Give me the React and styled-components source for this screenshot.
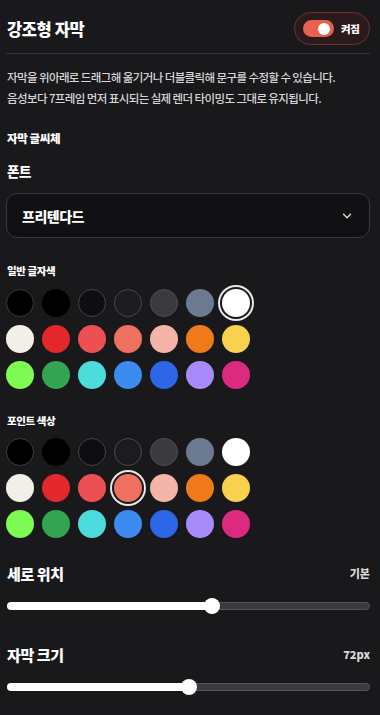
import React from "react";
import styled, { createGlobalStyle } from "styled-components";
import { ChevronDown } from "lucide-react";

const Global = createGlobalStyle`
  html, body { margin: 0; padding: 0; background: #19181b; }
  body { font-family: "Noto Sans CJK KR", "Noto Sans", sans-serif; color: #fff; overflow: hidden; }
  * { box-sizing: border-box; }
`;

const Panel = styled.div`
  width: 380px;
  height: 715px;
  padding: 12px 10px 0 6px;
  background: #19181b;
  display: flex;
  flex-direction: column;
`;

const Header = styled.div`
  display: flex;
  align-items: center;
  justify-content: space-between;
  height: 33px;
  padding-left: 1px;
`;

const Title = styled.h1`
  margin: 0;
  font-size: 16.5px;
  font-weight: 800;
  letter-spacing: -0.4px;
  color: #fff;
`;

const TogglePill = styled.button`
  display: flex;
  align-items: center;
  gap: 7px;
  height: 33px;
  width: 76px;
  padding: 0 0 0 8px;
  border-radius: 17px;
  border: 1px solid #6e3434;
  background: #2a1a1b;
  cursor: pointer;
`;

const Switch = styled.span`
  position: relative;
  width: 31px;
  height: 17px;
  border-radius: 9px;
  background: #e8604f;
  display: flex;
  align-items: center;
  justify-content: flex-end;
  padding-right: 4px;
`;

const Knob = styled.span`
  width: 12px;
  height: 12px;
  border-radius: 50%;
  background: #fff;
`;

const ToggleText = styled.span`
  font-family: "Noto Sans CJK KR", sans-serif;
  font-size: 10.5px;
  font-weight: 800;
  color: #fff;
  letter-spacing: -0.3px;
`;

const Divider = styled.hr`
  margin: 8px 0 0 0;
  border: none;
  height: 1px;
  background: #333236;
`;

const Desc = styled.p`
  margin: 13px 0 0 1px;
  font-size: 11.5px;
  font-weight: 500;
  line-height: 21px;
  letter-spacing: -0.6px;
  color: #d6d6d8;
`;

const SectionLabel = styled.div`
  margin-top: ${(p) => p.$mt}px;
  padding-left: 1px;
  font-size: ${(p) => p.$size || 10.5}px;
  font-weight: 800;
  letter-spacing: -0.4px;
  line-height: ${(p) => p.$lh || 16}px;
  color: #fff;
`;

const Select = styled.div`
  margin-top: 12px;
  height: 45px;
  border-radius: 11px;
  border: 1px solid #38373b;
  background: #111113;
  display: flex;
  align-items: center;
  justify-content: space-between;
  padding: 0 15px 0 15px;
  color: #fff;
`;

const SelectText = styled.span`
  font-size: 14px;
  font-weight: 800;
  letter-spacing: -0.5px;
`;

const SwatchGrid = styled.div`
  margin-top: ${(p) => p.$mt}px;
  display: grid;
  grid-template-columns: repeat(7, 28px);
  column-gap: 8px;
  row-gap: ${(p) => p.$rowGap}px;
`;

const Swatch = styled.div`
  width: 28px;
  height: 28px;
  border-radius: 50%;
  background: ${(p) => p.$color};
  border: ${(p) => (p.$outline ? `1px solid ${p.$outline}` : "none")};
  box-shadow: ${(p) => (p.$selected ? "0 0 0 2px #19181b, 0 0 0 4px #e9e9e9" : "none")};
`;

const SliderHead = styled.div`
  margin-top: ${(p) => p.$mt}px;
  display: flex;
  justify-content: space-between;
  align-items: center;
  height: 22px;
  padding-left: 1px;
`;

const SliderTitle = styled.span`
  font-size: 15px;
  font-weight: 800;
  letter-spacing: -0.4px;
  color: #fff;
`;

const SliderValue = styled.span`
  font-size: 11px;
  font-weight: 800;
  color: #d9d9d9;
  letter-spacing: 0;
`;

const Track = styled.div`
  position: relative;
  margin: ${(p) => p.$mt}px 0 0 1px;
  height: 8px;
  border-radius: 4px;
  background: #3b3a3e;
  border: 1px solid #555458;
`;

const Fill = styled.div`
  position: absolute;
  left: -1px;
  top: -1px;
  bottom: -1px;
  border-radius: 4px;
  background: #fff;
`;

const Thumb = styled.div`
  position: absolute;
  top: 50%;
  width: 16px;
  height: 16px;
  margin: -8px 0 0 -8px;
  border-radius: 50%;
  background: #fff;
`;

const baseColors = [
  { c: "#000000", o: "#3c3c3e" },
  { c: "#000000" },
  { c: "#0e0e10", o: "#444446" },
  { c: "#1c1c1e", o: "#4a4a4c" },
  { c: "#3a3a3c", o: "#4e4e50" },
  { c: "#6b7a90" },
  { c: "#ffffff" },
  { c: "#f2efe7" },
  { c: "#e2282b" },
  { c: "#ec5052" },
  { c: "#f0705f" },
  { c: "#f4b4a7" },
  { c: "#f07a1a" },
  { c: "#f8d24c" },
  { c: "#7dfb52" },
  { c: "#33a552" },
  { c: "#4cdcdc" },
  { c: "#3b8bf0" },
  { c: "#2d66e6" },
  { c: "#a78bfa" },
  { c: "#dc2a80" },
];

function Palette({ selected, mt, rowGap }) {
  return (
    <SwatchGrid $mt={mt} $rowGap={rowGap}>
      {baseColors.map((s, i) => (
        <Swatch key={i} $color={s.c} $outline={s.o} $selected={i === selected} />
      ))}
    </SwatchGrid>
  );
}

function Slider({ pct, mt }) {
  return (
    <Track $mt={mt}>
      <Fill style={{ width: `${pct}%` }} />
      <Thumb style={{ left: `${pct}%` }} />
    </Track>
  );
}

export default function App() {
  return (
    <>
      <Global />
      <Panel>
        <Header>
          <Title>강조형 자막</Title>
          <TogglePill>
            <Switch>
              <Knob />
            </Switch>
            <ToggleText>켜짐</ToggleText>
          </TogglePill>
        </Header>
        <Divider />
        <Desc>
          자막을 위아래로 드래그해 옮기거나 더블클릭해 문구를 수정할 수 있습니다.
          <br />
          음성보다 7프레임 먼저 표시되는 실제 렌더 타이밍도 그대로 유지됩니다.
        </Desc>
        <SectionLabel $mt={21} $size={11.5}>자막 글씨체</SectionLabel>
        <SectionLabel $mt={15} $size={13.5} $lh={20}>폰트</SectionLabel>
        <Select>
          <SelectText>프리텐다드</SelectText>
          <ChevronDown size={14} color="#dddddd" strokeWidth={2.4} />
        </Select>
        <SectionLabel $mt={25} $size={10.5}>일반 글자색</SectionLabel>
        <Palette selected={6} mt={10} rowGap={8} />
        <SectionLabel $mt={24} $size={10.5}>포인트 색상</SectionLabel>
        <Palette selected={10} mt={9} rowGap={8} />
        <SliderHead $mt={24}>
          <SliderTitle>세로 위치</SliderTitle>
          <SliderValue>기본</SliderValue>
        </SliderHead>
        <Slider pct={56.5} mt={18} />
        <SliderHead $mt={33}>
          <SliderTitle>자막 크기</SliderTitle>
          <SliderValue>72px</SliderValue>
        </SliderHead>
        <Slider pct={50} mt={18} />
      </Panel>
    </>
  );
}
